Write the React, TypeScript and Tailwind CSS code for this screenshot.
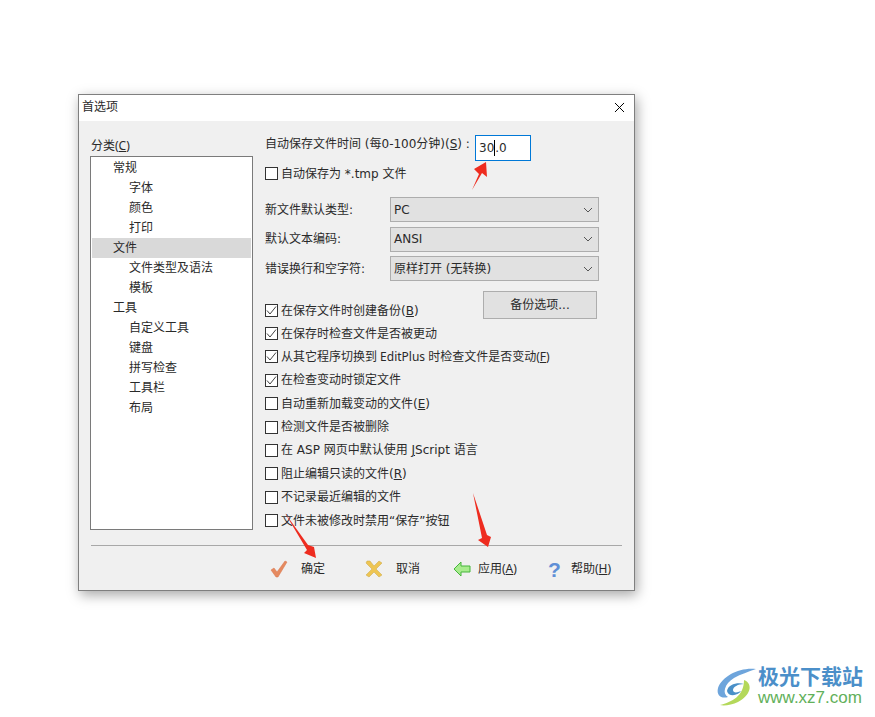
import { X } from 'lucide-react';

const tree = [
  { label: '常规', top: true },
  { label: '字体' },
  { label: '颜色' },
  { label: '打印' },
  { label: '文件', top: true, active: true },
  { label: '文件类型及语法' },
  { label: '模板' },
  { label: '工具', top: true },
  { label: '自定义工具' },
  { label: '键盘' },
  { label: '拼写检查' },
  { label: '工具栏' },
  { label: '布局' },
];

const selects = [
  { label: '新文件默认类型:', value: 'PC' },
  { label: '默认文本编码:', value: 'ANSI' },
  { label: '错误换行和空字符:', value: '原样打开 (无转换)' },
];

function Check({ checked }: { checked?: boolean }) {
  return (
    <span className="w-[13px] h-[13px] border border-[#333333] bg-white shrink-0 flex items-center justify-center">
      {checked && (
        <svg width="11" height="11" viewBox="0 0 11 11" fill="none">
          <path d="M1 5.5 L4 9 L10 1.5" stroke="#444444" strokeWidth="1" />
        </svg>
      )}
    </span>
  );
}

function CheckRow({ checked, children }: { checked?: boolean; children: React.ReactNode }) {
  return (
    <div className="flex items-center gap-[3px] h-[17px]">
      <Check checked={checked} />
      <span className="whitespace-pre">{children}</span>
    </div>
  );
}

function Chevron() {
  return (
    <svg width="10" height="6" viewBox="0 0 10 6" fill="none">
      <path d="M1 1 L5 5 L9 1" stroke="#555555" strokeWidth="1" />
    </svg>
  );
}

export default function App() {
  return (
    <div className="relative w-[875px] h-[717px] bg-white overflow-hidden text-[12px] text-[#2a2a2a] font-['DejaVu_Sans','Noto_Sans_CJK_SC',sans-serif]">
      <div className="absolute left-[78px] top-[94px] w-[557px] h-[497px] border border-[#7f7f7f] bg-[#f0f0f0] shadow-[2px_4px_12px_rgba(0,0,0,0.35)] flex flex-col">
        <div className="h-[26px] bg-white flex items-center justify-between pl-[3px] pr-[6px] pb-[2px] shrink-0">
          <span>首选项</span>
          <X size={17} strokeWidth={1.4} className="text-black mt-[1px]" />
        </div>

        <div className="flex px-[11px] pt-[14px] h-[424px] shrink-0">
          <div className="w-[163px] shrink-0 flex flex-col">
            <div className="h-[21px] flex items-center pl-px">
              <span className="font-['Noto_Sans','Noto_Sans_CJK_SC',sans-serif]">分类(<span className="underline">C</span>)</span>
            </div>
            <div className="h-[374px] border border-[#7a7a7a] bg-white p-px">
              {tree.map((t) => (
                <div
                  key={t.label}
                  className={`h-[20px] flex items-center ${t.top ? 'pl-[21px]' : 'pl-[37px]'} ${t.active ? 'bg-[#d9d9d9]' : ''}`}
                >
                  {t.label}
                </div>
              ))}
            </div>
          </div>

          <div className="ml-[12px] flex-1 flex flex-col">
            <div className="flex items-start h-[26px]">
              <span className="w-[210px] h-[18px] flex items-center whitespace-pre">
                <span>自动保存文件时间 (每0-100分钟)(<span className="underline">S</span>) :</span>
              </span>
              <div className="w-[56px] h-[26px] border border-[#0078d7] bg-white flex items-center pl-[3px] text-[12px]">
                <span>30</span>
                <span className="w-px h-[16px] bg-black" />
                <span>.0</span>
              </div>
            </div>
            <div className="mt-[4px] h-[17px]">
              <CheckRow>自动保存为 *.tmp 文件</CheckRow>
            </div>

            <div className="mt-[15px] flex flex-col gap-[4.5px]">
              {selects.map((s) => (
                <div key={s.label} className="flex items-center h-[25px]">
                  <span className="w-[125px] shrink-0">{s.label}</span>
                  <div className="w-[209px] h-[25px] bg-[#e1e1e1] border border-[#adadad] flex items-center justify-between pl-[3px] pr-[5px]">
                    <span>{s.value}</span>
                    <Chevron />
                  </div>
                </div>
              ))}
            </div>

            <div className="relative mt-[21px] flex flex-col">
              <div className="absolute left-[218px] -top-[11px] w-[114px] h-[28px] bg-[#e1e1e1] border border-[#adadad] flex items-center justify-center">
                备份选项...
              </div>
              <CheckRow checked>在保存文件时创建备份(<span className="underline">B</span>)</CheckRow>
              <div className="flex flex-col mt-[6px] gap-[6.4px]">
                <CheckRow checked>在保存时检查文件是否被更动</CheckRow>
                <CheckRow checked>
                  <span className="font-['Noto_Sans','Noto_Sans_CJK_SC',sans-serif]">从其它程序切换到 EditPlus 时检查文件是否变动(<span className="underline">F</span>)</span>
                </CheckRow>
                <CheckRow checked>在检查变动时锁定文件</CheckRow>
                <CheckRow>自动重新加载变动的文件(<span className="underline">E</span>)</CheckRow>
                <CheckRow>检测文件是否被删除</CheckRow>
                <CheckRow>在 ASP 网页中默认使用 <span className="underline">J</span>Script 语言</CheckRow>
                <CheckRow>阻止编辑只读的文件(<span className="underline">R</span>)</CheckRow>
                <CheckRow>不记录最近编辑的文件</CheckRow>
                <CheckRow>文件未被修改时禁用“保存”按钮</CheckRow>
              </div>
            </div>
          </div>
        </div>

        <div className="mx-[12px] h-px bg-[#a8a8a8] shrink-0" />

        <div className="flex items-center h-[45px] pt-[2px] pl-[191px] font-['Noto_Sans','Noto_Sans_CJK_SC',sans-serif]">
          <div className="flex items-center w-[95px]">
            <svg width="18" height="18" viewBox="0 0 18 18" className="mr-[13px]">
              <path d="M1 10 L4 8 L7 12 L15 1 L17 2 L8 17 L6 17 Z" fill="#e58a60" stroke="#d9744a" strokeWidth="0.5" />
            </svg>
            <span>确定</span>
          </div>
          <div className="flex items-center w-[88px]">
            <svg width="18" height="18" viewBox="0 0 18 18" className="mr-[13px]">
              <path d="M2 1 L5 1 L9 6 L14 1 L17 3 L11 9 L17 15 L14 17 L9 12 L4 17 L1 15 L7 9 L1 3 Z" fill="#eec552" stroke="#c9a646" strokeWidth="0.5" />
            </svg>
            <span>取消</span>
          </div>
          <div className="flex items-center w-[95px]">
            <svg width="18" height="16" viewBox="0 0 18 16" className="mr-[7px]">
              <path d="M1 8 L8 1 L8 5 L17 5 L17 11 L8 11 L8 15 Z" fill="#a8ec8e" stroke="#45b53a" strokeWidth="1" />
            </svg>
            <span>应用(<span className="underline">A</span>)</span>
          </div>
          <div className="flex items-center">
            <span className="w-[14px] mr-[9px] text-[21px] leading-none font-bold text-[#5f8fd6] font-['Liberation_Sans',sans-serif]">?</span>
            <span>帮助(<span className="underline">H</span>)</span>
          </div>
        </div>
      </div>

      <svg className="absolute left-[470px] top-[160px]" width="20" height="32" viewBox="0 0 20 32" fill="#ee2c1f">
        <path d="M2 30 L9 14 L4 9 L16 2 L17 17 L12 13 Z" />
      </svg>
      <svg className="absolute left-[280px] top-[510px]" width="40" height="50" viewBox="0 0 40 50" fill="#ee2c1f">
        <path d="M5 3 L28 35 L34 37 L36 48 L24 43 L27 40 Z" />
      </svg>
      <svg className="absolute left-[470px] top-[490px]" width="25" height="60" viewBox="0 0 25 60" fill="#ee2c1f">
        <path d="M3 3 L17 45 L21 47 L18 57 L8 50 L12 48 Z" />
      </svg>

      <div className="absolute left-[714px] top-[665px] w-[154px] h-[44px] flex">
        <svg width="46" height="44" viewBox="0 0 46 44" className="shrink-0 mt-[1px]">
          <path d="M42 3 C26 1 8 10 4 22 C2 30 8 33 14 31 C8 28 10 18 20 12 C27 8 34 6 42 3 Z" fill="#6ea5dc" />
          <path d="M13 25 C14 18 24 16 30 18 C24 18 19 21 19 24 C19 27 23 27 27 25 C24 30 14 31 13 25 Z" fill="#4a90c8" />
          <path d="M30 14 C40 18 36 30 24 36 C18 39 10 40 6 39 C18 36 30 30 30 14 Z" fill="#b4d85a" />
        </svg>
        <div className="-ml-[2px] flex flex-col">
          <span className="text-[21px] leading-[24px] font-bold text-[#4b8fc9] whitespace-nowrap">极光下载站</span>
          <span className="text-[17px] leading-[18px] text-[#62b05a] font-['Liberation_Sans',sans-serif] whitespace-nowrap">www.xz7.com</span>
        </div>
      </div>
    </div>
  );
}
